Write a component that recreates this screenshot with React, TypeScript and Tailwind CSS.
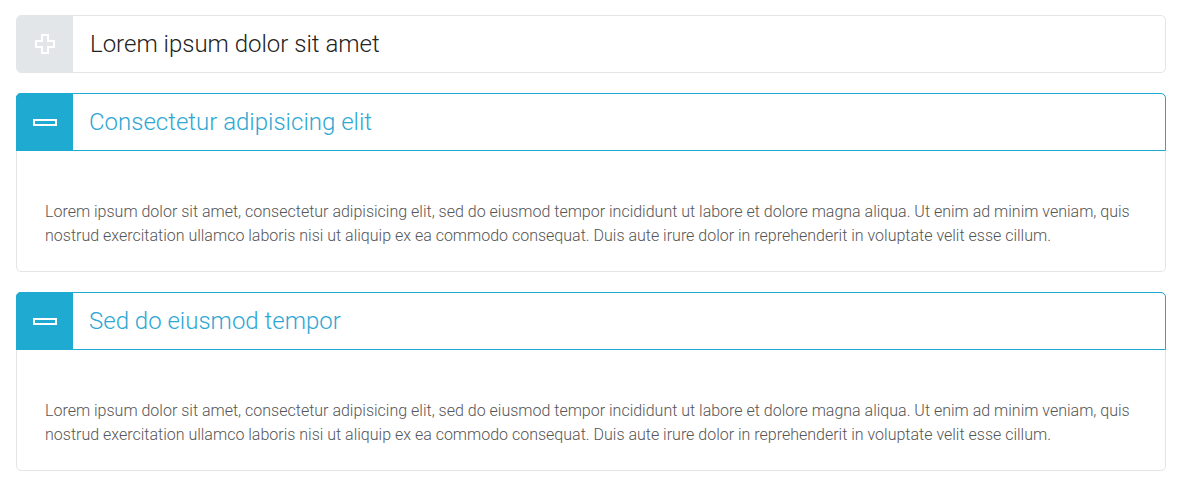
const body =
  "Lorem ipsum dolor sit amet, consectetur adipisicing elit, sed do eiusmod tempor incididunt ut labore et dolore magna aliqua. Ut enim ad minim veniam, quis nostrud exercitation ullamco laboris nisi ut aliquip ex ea commodo consequat. Duis aute irure dolor in reprehenderit in voluptate velit esse cillum.";

const items = [
  { title: "Lorem ipsum dolor sit amet", open: false },
  { title: "Consectetur adipisicing elit", open: true },
  { title: "Sed do eiusmod tempor", open: true },
];

function PlusIcon() {
  return (
    <svg width="20" height="20" viewBox="0 0 20 20" fill="none" className="-mt-px">
      <path
        d="M7 1h6v6h6v6h-6v6H7v-6H1V7h6z"
        stroke="white"
        strokeWidth="2"
        strokeLinejoin="miter"
      />
    </svg>
  );
}

function MinusIcon() {
  return (
    <svg width="24" height="7" viewBox="0 0 24 7" fill="none">
      <rect x="1" y="1" width="22" height="5" stroke="white" strokeWidth="2" />
    </svg>
  );
}

function Item({ title, open }: { title: string; open: boolean }) {
  return (
    <div className="rounded-[5px] border border-[#e3e6e8] bg-white">
      <div
        className={
          open
            ? "-m-px flex h-[58px] items-stretch rounded-t-[5px] border border-[#1eaad1]"
            : "flex h-[56px] items-stretch"
        }
      >
        <div
          className={
            open
              ? "-my-px -ml-px flex w-[57px] items-center justify-center rounded-tl-[5px] bg-[#1eaad1]"
              : "flex w-[56px] items-center justify-center rounded-l-[4px] bg-[#e3e6e8]"
          }
        >
          {open ? <MinusIcon /> : <PlusIcon />}
        </div>
        <div
          className={
            open
              ? "flex items-center pl-[16px] text-[24px] font-light text-[#2ea7d3]"
              : "flex items-center pl-[17px] text-[24px] font-light text-[#222222]"
          }
        >
          {title}
        </div>
      </div>
      {open && (
        <div className="px-[28px] pt-[50px] pb-[23px] text-[16px] font-light leading-[24px] text-[#555555]">
          {body}
        </div>
      )}
    </div>
  );
}

export default function App() {
  return (
    <div
      className="min-h-[485px] bg-white pt-[15px] pl-4 pr-[13px]"
      style={{ fontFamily: "Roboto, 'Liberation Sans', sans-serif" }}
    >
      <div className="flex flex-col gap-[20px]">
        {items.map((it) => (
          <Item key={it.title} title={it.title} open={it.open} />
        ))}
      </div>
    </div>
  );
}
